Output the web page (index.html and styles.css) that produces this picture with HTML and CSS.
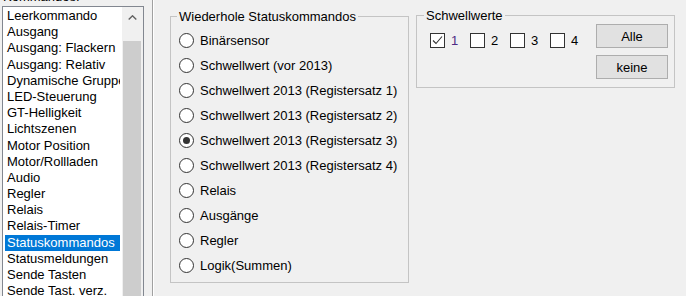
FILE: index.html
```html
<!DOCTYPE html>
<html>
<head>
<meta charset="utf-8">
<link rel="stylesheet" href="styles.css">
</head>
<body>
<div class="root">
  <div class="left">
    <div class="caption">Kommandos:</div>
    <div class="listbox">
      <div class="items">
        <div class="item">Leerkommando</div>
        <div class="item">Ausgang</div>
        <div class="item">Ausgang: Flackern</div>
        <div class="item">Ausgang: Relativ</div>
        <div class="item">Dynamische Gruppen</div>
        <div class="item">LED-Steuerung</div>
        <div class="item">GT-Helligkeit</div>
        <div class="item">Lichtszenen</div>
        <div class="item">Motor Position</div>
        <div class="item">Motor/Rollladen</div>
        <div class="item">Audio</div>
        <div class="item">Regler</div>
        <div class="item">Relais</div>
        <div class="item">Relais-Timer</div>
        <div class="item sel">Statuskommandos</div>
        <div class="item">Statusmeldungen</div>
        <div class="item">Sende Tasten</div>
        <div class="item">Sende Tast. verz.</div>
      </div>
      <div class="vscroll">
        <div class="arrow"><svg width="9" height="5" viewBox="0 0 9 5"><polyline points="0.7,4.5 4.5,0.8 8.3,4.5" fill="none" stroke="#606060" stroke-width="1.4"/></svg></div>
        <div class="thumb"></div>
      </div>
    </div>
  </div>
  <div class="sep"></div>
  <div class="content">
    <fieldset class="group g1">
      <legend>Wiederhole Statuskommandos</legend>
      <label class="radio"><span class="rb"></span>Binärsensor</label>
      <label class="radio"><span class="rb"></span>Schwellwert (vor 2013)</label>
      <label class="radio"><span class="rb"></span>Schwellwert 2013 (Registersatz 1)</label>
      <label class="radio"><span class="rb"></span>Schwellwert 2013 (Registersatz 2)</label>
      <label class="radio"><span class="rb on"></span>Schwellwert 2013 (Registersatz 3)</label>
      <label class="radio"><span class="rb"></span>Schwellwert 2013 (Registersatz 4)</label>
      <label class="radio"><span class="rb"></span>Relais</label>
      <label class="radio"><span class="rb"></span>Ausgänge</label>
      <label class="radio"><span class="rb"></span>Regler</label>
      <label class="radio"><span class="rb"></span>Logik(Summen)</label>
    </fieldset>
    <fieldset class="group g2">
      <legend>Schwellwerte</legend>
      <div class="cbrow">
        <label class="cb"><span class="box"><svg width="13" height="13" viewBox="0 0 13 13"><polyline points="2,6.5 5,9.5 11,2.5" fill="none" stroke="#333" stroke-width="1.1"/></svg></span><span class="focus">1</span></label>
        <label class="cb"><span class="box"></span>2</label>
        <label class="cb"><span class="box"></span>3</label>
        <label class="cb"><span class="box"></span>4</label>
      </div>
      <div class="btns">
        <button class="btn">Alle</button>
        <button class="btn">keine</button>
      </div>
    </fieldset>
  </div>
</div>
</body>
</html>
```
FILE: styles.css
```css
html, body {
  margin: 0;
  padding: 0;
}
body {
  width: 686px;
  height: 296px;
  overflow: hidden;
  background: #f0f0f0;
  font: 13px "Liberation Sans", Arial, sans-serif;
  color: #000;
}
.root {
  display: flex;
  height: 296px;
}
.left {
  width: 144px;
  padding-left: 2px;
  box-sizing: border-box;
  display: flex;
  flex-direction: column;
  flex: none;
}
.caption {
  flex: none;
  height: 17px;
  line-height: 15px;
  margin-top: -11px;
  padding-left: 1px;
  white-space: nowrap;
}
.listbox {
  flex: none;
  width: 142px;
  height: 300px;
  box-sizing: border-box;
  border: 1px solid #828790;
  background: #fff;
  display: flex;
}
.items {
  flex: 1;
  min-width: 0;
  padding: 1px 0 0 2px;
}
.item {
  width: 115px;
  box-sizing: border-box;
  height: 16.2px;
  line-height: 16.2px;
  padding-left: 2px;
  white-space: nowrap;
  overflow: hidden;
}
.item.sel {
  background: #0078d7;
  color: #fff;
}
.vscroll {
  width: 21px;
  flex: none;
  background: #f0f0f0;
  display: flex;
  flex-direction: column;
}
.arrow {
  height: 20px;
  display: flex;
  align-items: center;
  justify-content: center;
}
.thumb {
  flex: 1;
  margin: 14px 2px 0 1px;
  background: #cdcdcd;
}
.sep {
  flex: none;
  width: 1px;
  margin-left: 8px;
  background: #a0a0a0;
  border-right: 1px solid #fff;
}
.content {
  display: flex;
  align-items: flex-start;
  padding-left: 16px;
}
.group {
  margin: 0;
  border: 1px solid #c4c4c4;
  min-width: 0;
  box-sizing: border-box;
}
.group legend {
  padding: 0 2px;
  line-height: 15px;
}
.g1 {
  width: 239px;
  margin-top: 9px;
  padding: 4px 6px 4px 6px;
  display: flex;
  flex-direction: column;
}
.radio {
  display: flex;
  align-items: center;
  height: 25px;
  gap: 6px;
  padding-left: 2px;
  white-space: nowrap;
}
.rb {
  flex: none;
  width: 15px;
  height: 15px;
  box-sizing: border-box;
  border: 1px solid #333;
  border-radius: 50%;
  background: #fff;
  display: flex;
  align-items: center;
  justify-content: center;
}
.rb.on::after {
  content: "";
  width: 7px;
  height: 7px;
  border-radius: 50%;
  background: #333;
}
.g2 {
  width: 259px;
  margin-top: 8px;
  margin-left: 7px;
  padding: 0 6px 8px 7px;
  display: flex;
  align-items: flex-start;
}
.cbrow {
  display: flex;
  margin: 10px 0 0 6px;
}
.cb {
  width: 40px;
  display: flex;
  align-items: center;
  gap: 6px;
  line-height: 15px;
}
.box {
  flex: none;
  width: 15px;
  height: 15px;
  box-sizing: border-box;
  border: 1px solid #333;
  background: #fff;
  display: flex;
}
.box svg {
  display: block;
}
.focus {
  color: #4e2a84;
}
.btns {
  margin-left: auto;
  margin-top: 1px;
  display: flex;
  flex-direction: column;
  gap: 7px;
}
.btn {
  width: 72px;
  height: 24px;
  padding: 0;
  margin: 0;
  background: #e1e1e1;
  border: 1px solid #adadad;
  font: inherit;
  color: #000;
}
```
